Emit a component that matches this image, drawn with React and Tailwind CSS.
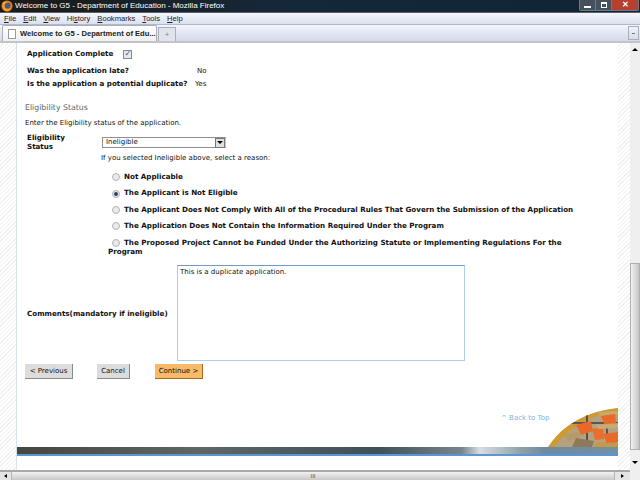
import React from 'react';

const menus = [
  ['F', 'ile'],
  ['E', 'dit'],
  ['V', 'iew'],
  ['', 'Hi', 's', 'tory'],
  ['B', 'ookmarks'],
  ['T', 'ools'],
  ['H', 'elp'],
];

const reasons = [
  { label: 'Not Applicable' },
  { label: 'The Applicant is Not Eligible', checked: true },
  { label: 'The Applicant Does Not Comply With All of the Procedural Rules That Govern the Submission of the Application' },
  { label: 'The Application Does Not Contain the Information Required Under the Program' },
];

const Radio = ({ checked }) => (
  <span className="inline-flex w-[8px] h-[8px] mx-[0.5px] rounded-full border border-[#b4b4b4] bg-[#e9e9e9] items-center justify-center shrink-0">
    {checked && <span className="w-[4px] h-[4px] rounded-full bg-[#27456f]" />}
  </span>
);

const Firefox = () => (
  <svg width="12" height="12" viewBox="0 0 14 14" className="shrink-0">
    <circle cx="7" cy="7" r="6.5" fill="#e8791c" />
    <circle cx="7.5" cy="6.5" r="3.5" fill="#3a5f8c" />
    <path d="M2 3 Q5 1 8 3 Q4 3.5 4 7 Q4 11 9 11 Q11 11 12 9 Q11 13 7 13 Q1 12 2 3Z" fill="#f5a623" />
  </svg>
);

// corner photo of the orange chairs in the page footer
const FooterPhoto = () => (
  <svg width="70" height="39" viewBox="0 0 70 39" className="absolute right-0 bottom-[23px]">
    <clipPath id="arc">
      <path d="M0 39 C10 24 30 4 70 0 L70 39Z" />
    </clipPath>
    <g clipPath="url(#arc)">
      <rect width="70" height="39" fill="#b5a180" />
      <path d="M0 39 C10 24 30 4 70 0 L70 3 C36 7 16 26 6 39Z" fill="#d3982c" />
      <rect x="22" y="14" width="48" height="2" fill="#5b5750" />
      <rect x="38" y="4" width="2" height="30" fill="#55524c" />
      <rect x="58" y="6" width="2" height="30" fill="#5b5750" />
      <path d="M50 4 L69 3 L70 7 L52 8Z" fill="#c9a96b" />
      <path d="M53 8 L67 6 L68 15 L57 18Z" fill="#e8692a" />
      <path d="M28 17 L43 13 L45 23 L33 27Z" fill="#e8692a" />
      <path d="M44 21 L55 19 L56 31 L47 32Z" fill="#ea6f2d" />
      <path d="M55 26 L70 24 L70 34 L59 36Z" fill="#e8692a" />
      <path d="M48 17 L70 15 L70 20 L50 21Z" fill="#c7ab76" />
      <path d="M16 27 L30 24 L32 30 L20 33Z" fill="#b39a68" />
      <path d="M28 30 L46 33 L44 39 L24 39Z" fill="#8d7a5c" />
      <path d="M48 34 L70 35 L70 39 L46 39Z" fill="#c49a4a" />
    </g>
  </svg>
);

const App = () => {
  return (
    <div className="w-[640px] h-[480px] overflow-hidden flex flex-col bg-white font-['Liberation_Sans',sans-serif] text-black">
      {/* Title bar */}
      <div className="h-[13px] shrink-0 flex items-start bg-[linear-gradient(100deg,#1b1a17_0%,#15283a_45%,#0f2436_100%)] border-b border-[#59626b] relative">
        <div className="flex items-center gap-[2px] pl-[1px] h-[12px]">
          <Firefox />
          <span className="text-[8px] leading-[12px] text-white whitespace-nowrap">Welcome to G5 - Department of Education - Mozilla Firefox</span>
        </div>
        <div className="absolute right-[1px] top-0 h-[11px] flex border border-t-0 border-[#6f7a84] rounded-b-[2px]">
          <div className="w-[16px] bg-[#45525e] flex items-center justify-center border-r border-[#6f7a84]">
            <span className="w-[7px] h-[2px] mt-[3px] bg-white" />
          </div>
          <div className="w-[16px] bg-[#45525e] flex items-center justify-center border-r border-[#6f7a84]">
            <span className="w-[6px] h-[6px] border border-t-2 border-white" />
          </div>
          <div className="w-[26px] bg-[#b5402f] flex items-center justify-center text-white text-[8px] font-bold leading-none">✕</div>
        </div>
      </div>

      {/* Menu bar */}
      <div className="h-[12px] shrink-0 bg-[linear-gradient(#f4f6fb,#dbe0f0)] border-b border-[#b2b8c8] flex items-center pl-[4px] gap-[7px] text-[7.6px] leading-[11px] text-[#222]">
        {menus.map((m) => (
          <span key={m.join('')} className="whitespace-nowrap">
            {m.length > 2 ? (
              <>
                {m[1]}
                <span className="underline">{m[2]}</span>
                {m[3]}
              </>
            ) : (
              <>
                <span className="underline">{m[0]}</span>
                {m[1]}
              </>
            )}
          </span>
        ))}
      </div>

      {/* Tab bar */}
      <div className="h-[18px] shrink-0 bg-[linear-gradient(#f2f5fa,#d4d9ec)] border-b-2 border-[#c4c4c4] flex items-end pl-[2px] relative">
        <div className="w-[155px] h-[16px] bg-[linear-gradient(#ffffff,#eef0f5)] border border-b-0 border-[#a9aeb8] rounded-t-[2px] flex items-center pl-[5px] gap-[4px]">
          <span className="w-[8px] h-[10px] bg-white border border-[#9a9a9a] shrink-0" />
          <span className="text-[7.6px] font-bold leading-none text-[#222] whitespace-nowrap">Welcome to G5 - Department of Edu...</span>
        </div>
        <div className="w-[18px] h-[14px] ml-[1px] bg-[#dfe3ee] border border-b-0 border-[#a9aeb8] flex items-center justify-center text-[8px] leading-none text-[#888]">+</div>
        <div className="absolute right-[1px] top-[1px] w-[11px] h-[14px] border border-[#a9aeb8] flex items-center justify-center">
          <span className="w-[3px] h-[1px] bg-[#777]" />
        </div>
      </div>

      {/* Viewport */}
      <div className="flex-1 flex min-h-0">
        <div className="flex-1 flex flex-col min-w-0">
          <div className="flex-1 flex min-h-0">
            <div className="w-[17px] shrink-0 border-r border-[#d5e2f0] bg-[repeating-linear-gradient(135deg,#ffffff_0px,#ffffff_2px,#f1f1f1_2px,#f1f1f1_3px)]" />
            <div className="flex-1 flex flex-col min-w-0 relative font-['DejaVu_Sans',sans-serif] text-[7px] text-[#111]">
              <div className="flex-1 pl-[8px] pt-[5px] min-h-0">
                <div className="flex items-center h-[12px] pl-[2px] font-bold text-[7.15px] whitespace-nowrap">
                  Application Complete
                  <span className="ml-[10px] w-[9px] h-[9px] border border-[#8a8a8a] bg-[#e4e8f0] flex items-center justify-center text-[8px] leading-none text-[#2a4c8c]">✓</span>
                </div>
                <div className="flex h-[13px] mt-[5px] items-center pl-[2px] whitespace-nowrap">
                  <span className="font-bold text-[7.15px] w-[170px]">Was the application late?</span>
                  <span>No</span>
                </div>
                <div className="flex h-[13px] items-center pl-[2px] whitespace-nowrap">
                  <span className="font-bold text-[7.15px] w-[168px]">Is the application a potential duplicate?</span>
                  <span>Yes</span>
                </div>
                <div className="mt-[11px] text-[7.8px] leading-[12px] text-[#666]">Eligibility Status</div>
                <div className="mt-[3px] leading-[12px]">Enter the Eligibility status of the application.</div>
                <div className="flex mt-[8px]">
                  <div className="w-[77px] pl-[2px] font-bold text-[7.15px] leading-[9px] -mt-[4px]">Eligibility<br />Status</div>
                  <div className="flex-1">
                    <div className="w-[124px] h-[11px] border border-[#8f8f8f] border-r-[#c8c8c8] flex items-center justify-between pl-[3px]">
                      <span>Ineligible</span>
                      <span className="w-[10px] h-[10px] bg-[#e0e0e0] border border-[#777] flex items-center justify-center">
                        <span className="border-x-[3px] border-x-transparent border-t-[3px] border-t-black" />
                      </span>
                    </div>
                    <div className="mt-[5px] leading-[11px] -ml-[1px]">If you selected Ineligible above, select a reason:</div>
                  </div>
                </div>
                <div className="ml-[83px] mt-[5px] font-bold text-[7.15px]">
                  {reasons.map((r) => (
                    <div key={r.label} className="flex items-center gap-[4px] h-[16.4px] pl-[3px] whitespace-nowrap">
                      <Radio checked={r.checked} />
                      <span>{r.label}</span>
                    </div>
                  ))}
                  <div className="leading-[9px] pt-[3px] whitespace-nowrap">
                    <span className="inline-flex pl-[3px] align-middle"><Radio /></span>
                    <span className="ml-[4px]">The Proposed Project Cannot be Funded Under the Authorizing Statute or Implementing Regulations For the</span>
                    <br />
                    Program
                  </div>
                </div>
                <div className="flex mt-[9.4px] items-center">
                  <div className="w-[152px] pl-[2px] pt-[3px] font-bold text-[7.15px] whitespace-nowrap">Comments(mandatory if ineligible)</div>
                  <div className="w-[288px] h-[96px] border border-[#a9d0ea] border-t-[#6d9cc4] px-[2px] py-[1px] leading-[10px]">This is a duplicate application.</div>
                </div>
                <div className="flex mt-[3px]">
                  <span className="w-[48px] h-[15px] flex items-center justify-center bg-[#dcdcdc] border-r border-b border-[#8a8a8a]">&lt; Previous</span>
                  <span className="ml-[24px] w-[33px] h-[15px] flex items-center justify-center bg-[#dcdcdc] border-r border-b border-[#8a8a8a]">Cancel</span>
                  <span className="ml-[25px] w-[48px] h-[15px] flex items-center justify-center bg-[#f7b96a] border-r border-b border-[#a9691c]">Continue &gt;</span>
                </div>
                <div className="mt-[34px] ml-[476px] leading-[10px] text-[#7fb3de] whitespace-nowrap">^ Back to Top</div>
              </div>
              <FooterPhoto />
              <div className="h-[9px] shrink-0 bg-[linear-gradient(90deg,#45463c_0%,#5f6763_30%,#3f505c_60%,#77858e_74%,#d8dde0_77%,#8fa0aa_84%,#6f8a9c_88%,#7390a4_100%)] border-b-2 border-[#5a95d8]" />
              <div className="h-[14px] shrink-0" />
            </div>
            <div className="w-[12px] shrink-0 bg-[repeating-linear-gradient(135deg,#ffffff_0px,#ffffff_2px,#f1f1f1_2px,#f1f1f1_3px)]" />
          </div>
          {/* Horizontal scrollbar */}
          <div className="h-[10px] shrink-0 border-t-2 border-[#a9a9a9] bg-[#e4e4e4] flex items-center">
            <div className="w-[11px] flex justify-center">
              <span className="border-y-[2px] border-y-transparent border-r-[3px] border-r-black" />
            </div>
            <div className="w-[604px] h-full bg-[linear-gradient(#f2f2f2,#c8c8c8)] border-x border-[#b5b5b5] flex items-center justify-center">
              <span className="text-[6px] leading-none text-[#555]">III</span>
            </div>
            <div className="flex-1 flex justify-center">
              <span className="border-y-[2px] border-y-transparent border-l-[3px] border-l-black" />
            </div>
          </div>
        </div>
        {/* Vertical scrollbar */}
        <div className="w-[10px] shrink-0 bg-[#efefef] flex flex-col items-center pt-[5px]">
          <span className="border-x-[3px] border-x-transparent border-b-[3px] border-b-black" />
          <div className="mt-[212px] w-full h-[187px] bg-[linear-gradient(90deg,#f2f2f2,#c4c4c4)] border border-[#b0b0b0]" />
          <span className="mt-[11px] border-x-[3px] border-x-transparent border-t-[3px] border-t-black" />
        </div>
      </div>
    </div>
  );
};

export default App;
